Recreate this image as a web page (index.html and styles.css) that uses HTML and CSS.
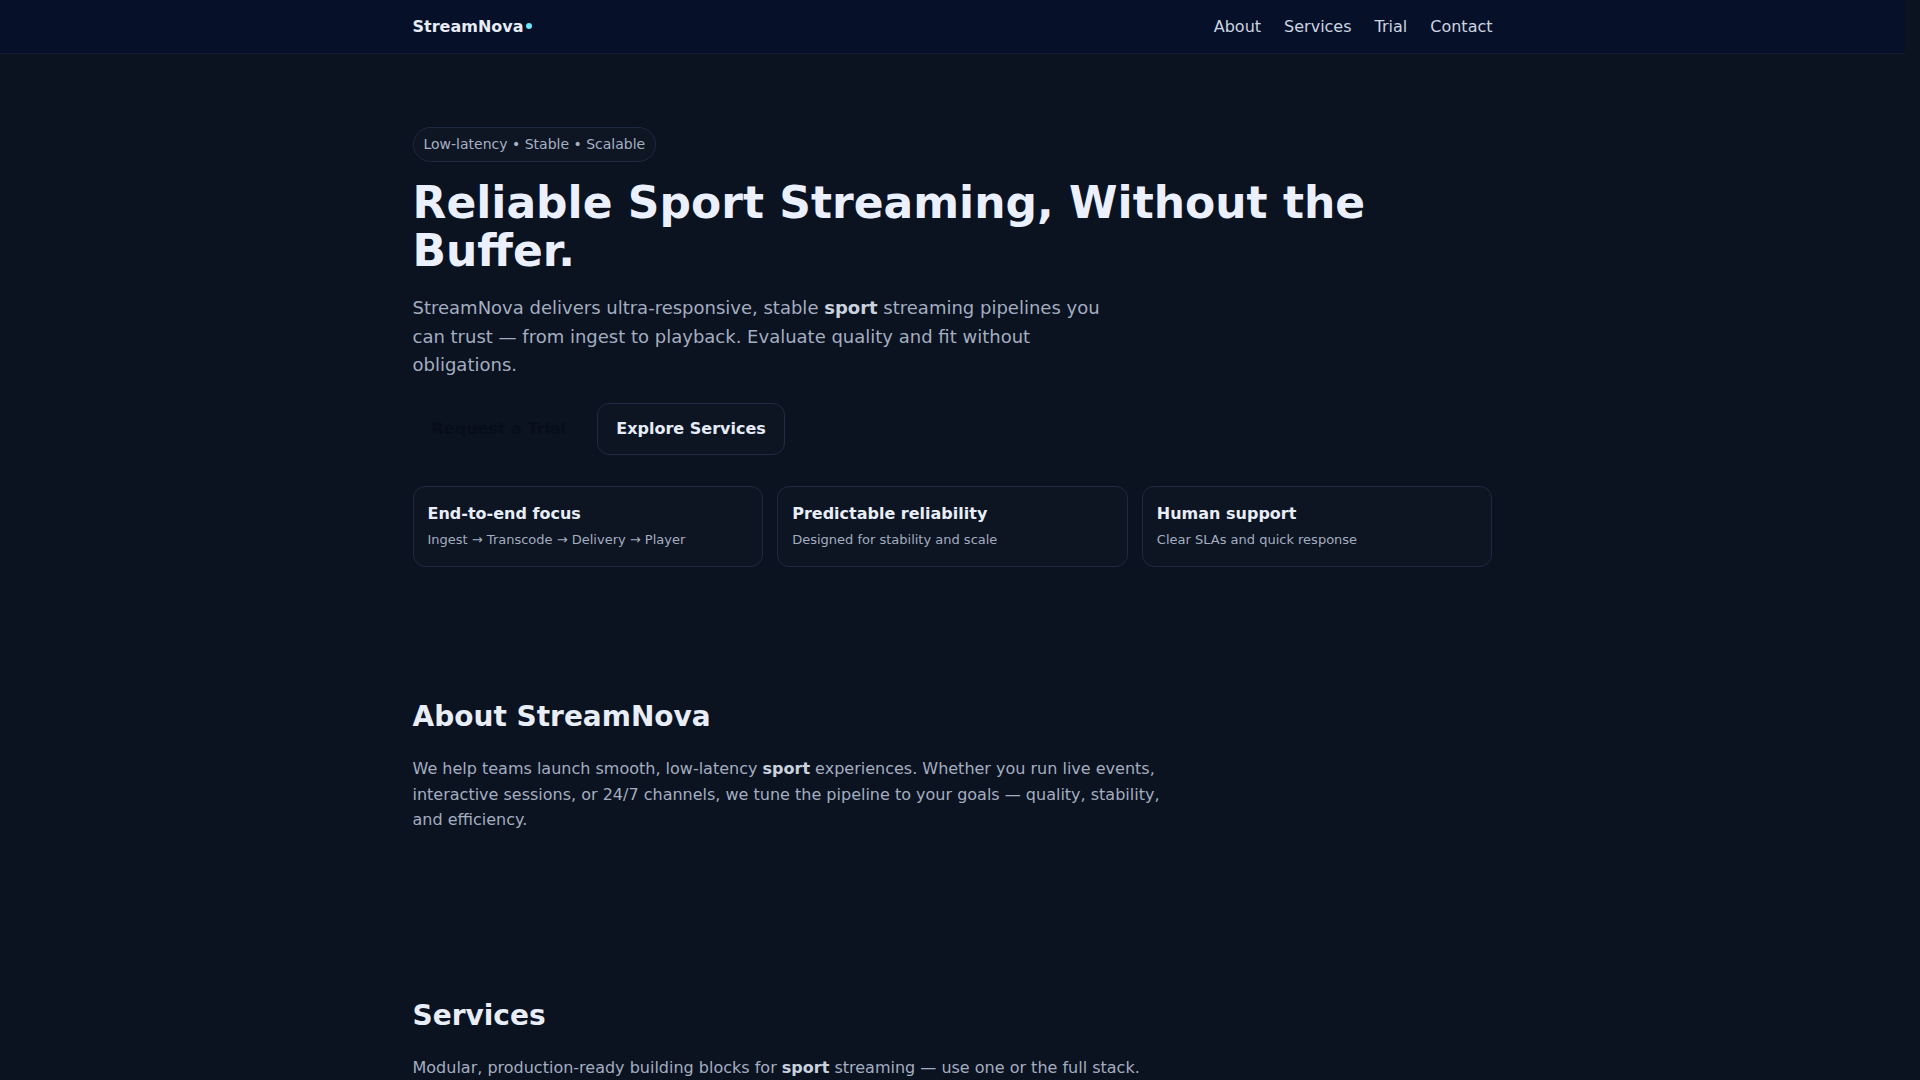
FILE: index.html
```html
<!DOCTYPE html>
<html lang="en">
<head>
<meta charset="utf-8">
<title>StreamNova — Reliable Sport Streaming</title>
<link rel="stylesheet" href="styles.css">
</head>
<body>
<header class="site-header">
  <div class="container header-inner">
    <a class="logo" href="#">StreamNova<span class="logo-dot"></span></a>
    <nav class="nav">
      <a href="#about">About</a>
      <a href="#services">Services</a>
      <a href="#trial">Trial</a>
      <a href="#contact">Contact</a>
    </nav>
  </div>
</header>

<main>
  <section class="hero">
    <div class="container">
      <span class="badge">Low-latency • Stable • Scalable</span>
      <h1 class="hero-title">Reliable Sport Streaming, Without the Buffer.</h1>
      <p class="hero-lead">StreamNova delivers ultra-responsive, stable <strong>sport</strong> streaming pipelines you can trust — from ingest to playback. Evaluate quality and fit without obligations.</p>
      <div class="actions">
        <a class="btn btn-primary" href="#trial">Request a Trial</a>
        <a class="btn btn-ghost" href="#services">Explore Services</a>
      </div>
      <div class="features">
        <div class="feature">
          <div class="feature-title">End-to-end focus</div>
          <div class="feature-text">Ingest → Transcode → Delivery → Player</div>
        </div>
        <div class="feature">
          <div class="feature-title">Predictable reliability</div>
          <div class="feature-text">Designed for stability and scale</div>
        </div>
        <div class="feature">
          <div class="feature-title">Human support</div>
          <div class="feature-text">Clear SLAs and quick response</div>
        </div>
      </div>
    </div>
  </section>

  <section class="section" id="about">
    <div class="container">
      <h2 class="section-title">About StreamNova</h2>
      <p class="section-text">We help teams launch smooth, low-latency <strong>sport</strong> experiences. Whether you run live events, interactive sessions, or 24/7 channels, we tune the pipeline to your goals — quality, stability, and efficiency.</p>
    </div>
  </section>

  <section class="section" id="services">
    <div class="container">
      <h2 class="section-title">Services</h2>
      <p class="section-text">Modular, production-ready building blocks for <strong>sport</strong> streaming — use one or the full stack.</p>
      <div class="service-grid">
        <div class="feature">
          <div class="feature-title">Ingest &amp; Contribution</div>
          <div class="feature-text">SRT, RTMP and WebRTC ingest with redundancy</div>
        </div>
        <div class="feature">
          <div class="feature-title">Transcoding</div>
          <div class="feature-text">Adaptive ladders tuned for motion-heavy content</div>
        </div>
        <div class="feature">
          <div class="feature-title">Delivery</div>
          <div class="feature-text">Multi-CDN routing with low-latency HLS and DASH</div>
        </div>
        <div class="feature">
          <div class="feature-title">Player &amp; Analytics</div>
          <div class="feature-text">QoE monitoring from first frame to last</div>
        </div>
      </div>
    </div>
  </section>

  <section class="section" id="trial">
    <div class="container">
      <h2 class="section-title">Trial</h2>
      <p class="section-text">Run a no-obligation evaluation on your own content and see the difference in latency and stability.</p>
      <div class="service-grid">
        <div class="feature">
          <div class="feature-title">1. Scope</div>
          <div class="feature-text">Tell us about your events and audience</div>
        </div>
        <div class="feature">
          <div class="feature-title">2. Setup</div>
          <div class="feature-text">We configure a pipeline for your goals</div>
        </div>
        <div class="feature">
          <div class="feature-title">3. Evaluate</div>
          <div class="feature-text">Measure quality, latency and reliability</div>
        </div>
        <div class="feature">
          <div class="feature-title">4. Decide</div>
          <div class="feature-text">Keep going, or walk away — no strings</div>
        </div>
      </div>
    </div>
  </section>

  <section class="section" id="contact">
    <div class="container">
      <h2 class="section-title">Contact</h2>
      <p class="section-text">Questions about your setup? Reach out and a streaming engineer will get back to you.</p>
    </div>
  </section>
</main>

<footer class="site-footer">
  <div class="container">© StreamNova. All rights reserved.</div>
</footer>
</body>
</html>
```

FILE: styles.css
```css
:root {
  color-scheme: dark;
}

* {
  box-sizing: border-box;
}

html {
  margin: 0;
  padding: 0;
  background: #0b1220;
}

/* keep the width of a classic scrollbar gutter at the right */
body {
  margin: 0 15px 0 0;
  padding: 0;
  background: #0b1220;
  color: #e5ecf8;
  font-family: "DejaVu Sans", "Noto Sans", sans-serif;
  font-size: 16px;
  line-height: 1.5;
}

a {
  color: inherit;
  text-decoration: none;
}

.container {
  max-width: 1080px;
  margin: 0 auto;
}

/* Header */
.site-header {
  background: #061029;
  border-bottom: 1px solid #131d30;
}

.header-inner {
  height: 53px;
  display: flex;
  align-items: center;
  justify-content: space-between;
}

.logo {
  display: flex;
  align-items: center;
  font-weight: 700;
  font-size: 16px;
  color: #e6ecf8;
}

.logo-dot {
  width: 6px;
  height: 6px;
  border-radius: 50%;
  background: #67e8f9;
  margin-left: 2px;
  margin-top: -1px;
}

.nav {
  display: flex;
  gap: 23px;
}

.nav a {
  color: #cbd5e1;
  font-size: 16px;
}

/* Hero */
.hero {
  padding: 73px 0 50px;
}

.badge {
  display: inline-block;
  padding: 6px 10px;
  border: 1px solid #1d2a40;
  border-radius: 999px;
  background: rgba(255, 255, 255, 0.015);
  color: #a5b1c4;
  font-size: 14px;
  line-height: 21px;
}

.hero-title {
  margin: 17px 0 18px;
  font-size: 44px;
  line-height: 1.1;
  font-weight: 700;
  color: #eaf0ff;
}

.hero-lead {
  margin: 0;
  max-width: 720px;
  font-size: 18px;
  line-height: 1.6;
  color: #a3aec0;
}

.hero-lead strong,
.section-text strong {
  color: #c9d2df;
}

.actions {
  display: flex;
  gap: 12px;
  margin-top: 23px;
}

.btn {
  display: inline-block;
  padding: 13px 18px;
  border-radius: 12px;
  font-weight: 700;
  font-size: 16px;
  line-height: 24px;
  border: 1px solid transparent;
}

.btn-primary {
  color: #070e1b;
  background: transparent;
}

.btn-ghost {
  border-color: #1f2c44;
  color: #e5ecf8;
  background: rgba(255, 255, 255, 0.01);
}

.features {
  display: grid;
  grid-template-columns: repeat(3, 1fr);
  gap: 14px;
  margin-top: 31px;
}

.feature {
  border: 1px solid #1d2a42;
  border-radius: 12px;
  padding: 15px 14px 16px;
  background: rgba(255, 255, 255, 0.012);
}

.feature-title {
  font-weight: 700;
  font-size: 16px;
  line-height: 24px;
  color: #e8eef9;
  margin-bottom: 4px;
}

.feature-text {
  font-size: 13px;
  line-height: 20px;
  color: #a3aec0;
}

/* Sections */
.section {
  padding: 82px 0;
}

.section-title {
  margin: 0 0 22px;
  font-size: 28px;
  line-height: 1.25;
  font-weight: 700;
  color: #e8eef9;
}

.section-text {
  margin: 0;
  max-width: 760px;
  font-size: 16px;
  line-height: 1.6;
  color: #a3aec0;
}

#services {
  padding-top: 83px;
}

.service-grid {
  display: grid;
  grid-template-columns: repeat(2, 1fr);
  gap: 14px;
  margin-top: 28px;
}

.site-footer {
  border-top: 1px solid #131d30;
  padding: 28px 0;
  font-size: 13px;
  color: #7c889c;
}
```
